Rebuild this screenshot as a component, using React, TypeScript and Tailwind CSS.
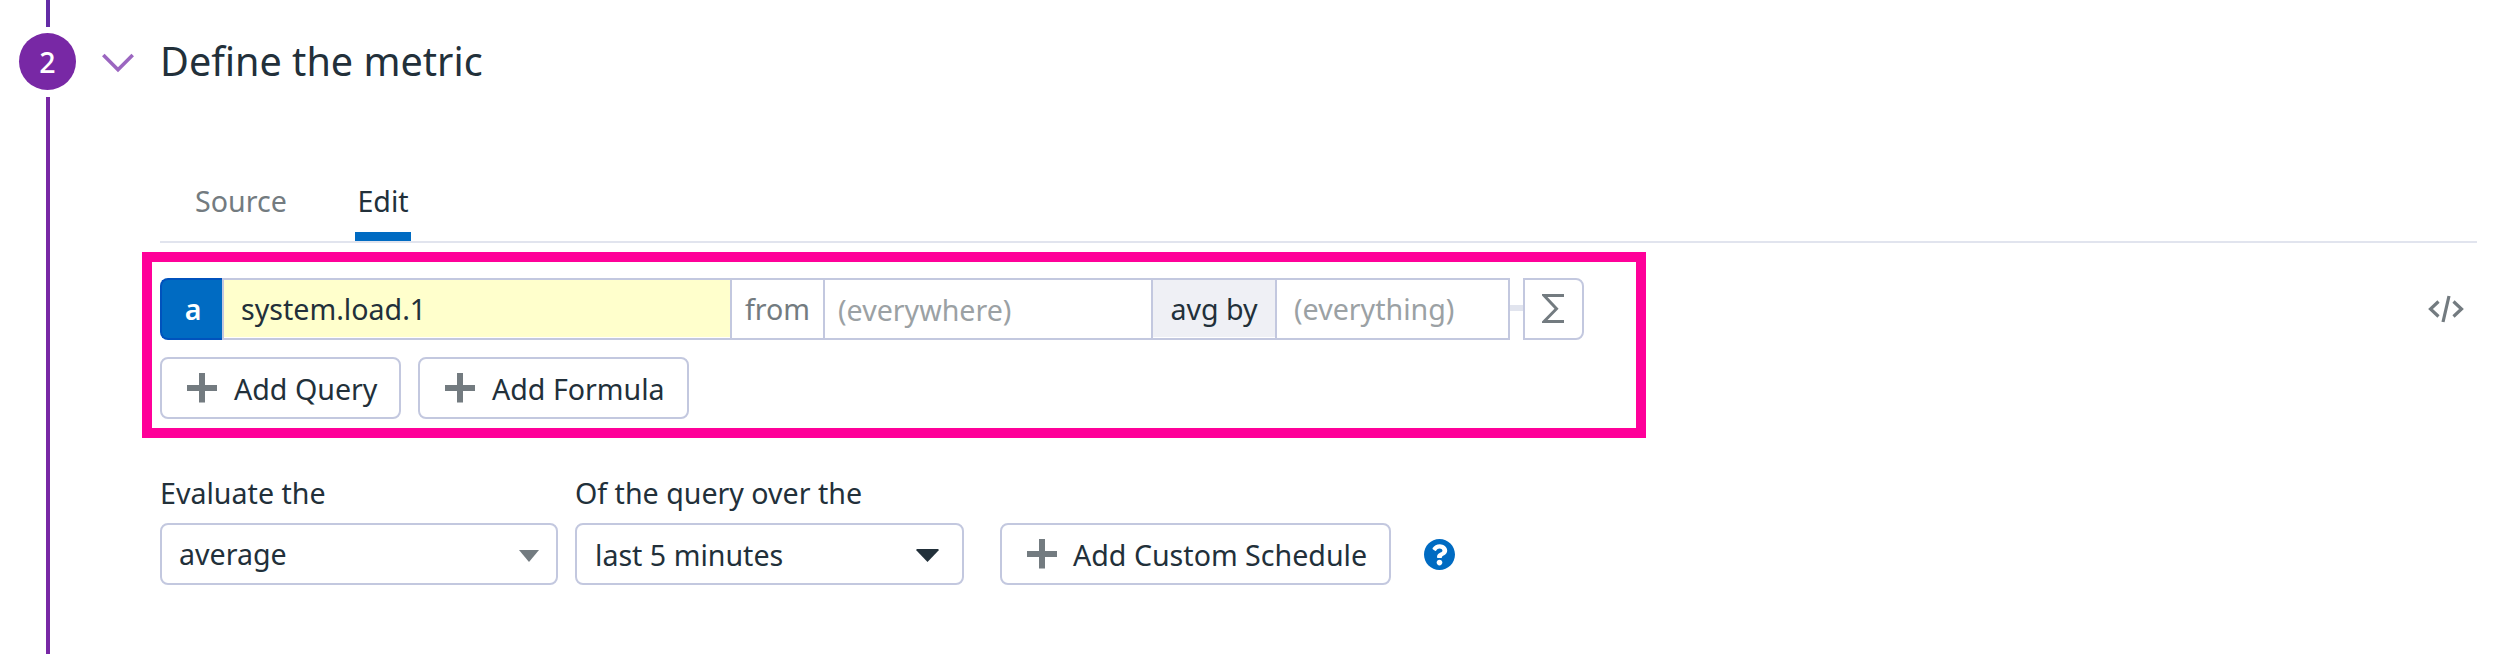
import type { ReactNode } from "react";

function Plus() {
  return (
    <svg width="30" height="30" viewBox="0 0 30 30" className="shrink-0" fill="#737b80">
      <path d="M12 0h6v12h12v6H18v11.500h-6V18H0v-6h12z" />
    </svg>
  );
}

function Btn({ children, className }: { children: ReactNode; className: string }) {
  return (
    <button
      className={`flex h-[62px] items-center rounded-lg border-2 border-[#c3c8df] bg-white whitespace-nowrap ${className}`}
    >
      <Plus />
      <span className="pt-0.5">{children}</span>
    </button>
  );
}

function StepRail() {
  return (
    <div className="flex w-[95px] shrink-0 flex-col items-center">
      <div className="h-[27px] w-1 bg-[#632ca6]" />
      <div className="my-1.5 flex size-[57px] shrink-0 items-center justify-center rounded-full bg-[#7828a5] font-medium text-white">
        2
      </div>
      <div className="mt-px w-1 grow bg-[#7828a5]" />
    </div>
  );
}

function QueryRow() {
  return (
    <div className="flex h-[62px] items-center">
      <div className="flex h-full w-[62px] items-center justify-center rounded-l-lg border-2 border-r-0 border-[#0052bd] bg-[#006bc2] pl-0.5 font-semibold text-white">
        a
      </div>
      <div className="flex h-full w-[508px] items-center border-y-2 border-l-2 border-[#c3c8df] bg-[#ffffcc] pl-[17px] shadow-[inset_0_-1px_0_#ffffff]">
        system.load.1
      </div>
      <div className="flex h-full w-[93px] items-center justify-center border-y-2 border-l-2 border-[#c3c8df] text-[#737b80]">
        from
      </div>
      <div className="flex h-full w-[328px] items-center border-y-2 border-l-2 border-[#c3c8df] pt-0.5 pl-[13px] text-[#9ba1a4]">
        (everywhere)
      </div>
      <div className="flex h-full w-[124px] items-center justify-center border-y-2 border-l-2 border-[#c3c8df] bg-[#eff0f5] shadow-[inset_0_-1px_0_#ffffff]">
        avg by
      </div>
      <div className="flex h-full w-[235px] items-center border-2 border-[#c3c8df] pl-[17px] text-[#9ba1a4]">
        (everything)
      </div>
      <div className="mb-0.5 h-1.5 w-[13px] bg-[#e1e4ee]" />
      <div className="flex h-full w-[61px] items-center justify-center rounded-r-lg border-2 border-[#c3c8df] pr-px">
        <svg width="22" height="30" viewBox="0 0 22 30" fill="none" stroke="#737b80" strokeWidth="3">
          <path d="M22 1.500H2L14.500 14.800L2 27.500H22" />
        </svg>
      </div>
    </div>
  );
}

export default function App() {
  return (
    <div className="flex h-[654px] w-[2502px] overflow-hidden bg-white font-['Noto_Sans',sans-serif] text-[28.6px] leading-[38px] text-[#22303a]">
      <StepRail />
      <main className="flex grow flex-col">
        <header className="flex h-[121px] items-center pl-[7px]">
          <svg width="32" height="20" viewBox="0 0 32 20" fill="none" stroke="#9b66c0" strokeWidth="3.6" className="mt-1">
            <path d="M1.300 2L16 16.700L30.700 2" />
          </svg>
          <h2 className="ml-[26px] text-[39.6px] leading-[54px]">Define the metric</h2>
        </header>

        <nav className="mr-[25px] ml-[65px] flex h-[122px] items-end border-b-2 border-[#e1e4ee] pl-[35px]">
          <div className="h-[59px] w-[160px] text-[#737b80]">Source</div>
          <div className="h-[59px] w-14 border-b-[9px] border-[#006bc2] text-center">Edit</div>
        </nav>

        <div className="mt-[9px] ml-[47px] flex items-center">
          <section className="flex h-[186px] w-[1504px] flex-col gap-[17px] border-10 border-[#ff0099] pt-4 pl-2">
            <QueryRow />
            <div className="flex gap-[17px]">
              <Btn className="w-[241px] gap-[17px] pl-[25px]">Add Query</Btn>
              <Btn className="w-[271px] gap-[17px] pl-[25px]">Add Formula</Btn>
            </div>
          </section>
          <svg width="36" height="28" viewBox="0 0 36 28" fill="none" stroke="#737b80" strokeWidth="3.2" className="mb-[73px] ml-[782px]">
            <path d="M10.500 6.500L2.500 14L10.500 21.500M25.500 6.500L33.500 14L25.500 21.500M21 1L15 27" />
          </svg>
        </div>

        <div className="mt-9 flex items-end pl-[65px]">
          <div className="w-[398px]">
            <div className="mb-[11px]">Evaluate the</div>
            <div className="flex h-[62px] items-center justify-between rounded-lg border-2 border-[#c3c8df] pr-[17px] pl-[17px]">
              average
              <svg width="20" height="12" viewBox="0 0 20 12" fill="#737b80" className="mt-[3px]">
                <path d="M0 0H20L10 12Z" />
              </svg>
            </div>
          </div>
          <div className="ml-[17px] w-[389px]">
            <div className="mb-[11px]">Of the query over the</div>
            <div className="flex h-[62px] items-center justify-between rounded-lg border-2 border-[#c3c8df] pt-0.5 pr-[23px] pl-[18px]">
              last 5 minutes
              <svg width="23" height="13" viewBox="0 0 23 13" fill="#22303a" className="mt-px">
                <path d="M1 0H22L23 1L11.500 13L0 1Z" />
              </svg>
            </div>
          </div>
          <Btn className="ml-9 w-[391px] gap-4 pl-[25px]">Add Custom Schedule</Btn>
          <div className="ml-[33px] flex h-[62px] items-center pt-px">
            <svg width="31" height="31" viewBox="8 8 496 496" fill="#006bc2">
              <path d="M504 256c0 137-111 248-248 248S8 393 8 256 119 8 256 8s248 111 248 248zM262.700 90c-54.500 0-89.300 23-116.500 63.800-3.500 5.300-2.400 12.400 2.700 16.300l34.700 26.300c5.200 3.900 12.600 3 16.700-2.100 17.900-22.700 30.100-35.800 57.300-35.800 20.400 0 45.700 13.100 45.700 33 0 15-12.400 22.700-32.500 34C247.100 238.500 216 254.900 216 296v4c0 6.600 5.400 12 12 12h56c6.600 0 12-5.400 12-12v-1.300c0-28.500 83.200-29.600 83.200-106.700 0-58-60.200-102-116.500-102zM256 338c-25.400 0-46 20.600-46 46s20.600 46 46 46 46-20.600 46-46-20.600-46-46-46z" />
            </svg>
          </div>
        </div>
      </main>
    </div>
  );
}
